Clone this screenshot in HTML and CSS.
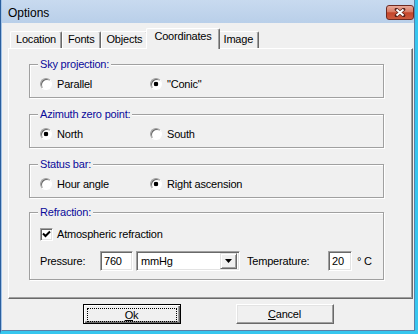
FILE: index.html
```html
<!DOCTYPE html>
<html lang="en">
<head>
    <meta charset="UTF-8">
    <meta name="viewport" content="width=device-width, initial-scale=1.0">
    <title>Options</title>
    <link rel="stylesheet" href="styles.css">
</head>
<body>
    <div class="window">
        <div class="frame">
            <div class="titlebar">
                <span class="title">Options</span>
                <button class="close-btn" aria-label="Close">
                    <svg width="12" height="9" viewBox="0 0 12 9">
                        <path d="M2.5 1.5 L9.5 7.5 M9.5 1.5 L2.5 7.5" stroke="#5a2119" stroke-width="3.6" stroke-linecap="round"/>
                        <path d="M2.5 1.5 L9.5 7.5 M9.5 1.5 L2.5 7.5" stroke="#fff" stroke-width="2"/>
                    </svg>
                </button>
            </div>

            <div class="dialog">
                <!-- Tabs -->
                <div class="tabs">
                    <div class="tab">Location</div>
                    <div class="tab">Fonts</div>
                    <div class="tab">Objects</div>
                    <div class="tab active">Coordinates</div>
                    <div class="tab">Image</div>
                </div>

                <div class="panel">
                    <fieldset class="group">
                        <legend>Sky projection:</legend>
                        <div class="options">
                            <label class="radio"><span class="dot"></span>Parallel</label>
                            <label class="radio checked"><span class="dot"></span>"Conic"</label>
                        </div>
                    </fieldset>

                    <fieldset class="group">
                        <legend>Azimuth zero point:</legend>
                        <div class="options">
                            <label class="radio checked"><span class="dot"></span>North</label>
                            <label class="radio"><span class="dot"></span>South</label>
                        </div>
                    </fieldset>

                    <fieldset class="group">
                        <legend>Status bar:</legend>
                        <div class="options">
                            <label class="radio"><span class="dot"></span>Hour angle</label>
                            <label class="radio checked"><span class="dot"></span>Right ascension</label>
                        </div>
                    </fieldset>

                    <fieldset class="group refraction">
                        <legend>Refraction:</legend>
                        <label class="check">
                            <span class="box">
                                <svg width="11" height="11" viewBox="0 0 11 11">
                                    <path d="M2 4.5 L4.5 7 L9 2.5" fill="none" stroke="#000" stroke-width="2"/>
                                </svg>
                            </span>
                            Atmospheric refraction
                        </label>
                        <div class="field-row">
                            <span class="lbl-pressure">Pressure:</span>
                            <span class="edit pressure">760</span>
                            <span class="combo">
                                <span class="combo-text">mmHg</span>
                                <span class="combo-btn">
                                    <svg width="7" height="4" viewBox="0 0 7 4"><path d="M0 0 H7 L3.5 4 Z" fill="#000"/></svg>
                                </span>
                            </span>
                            <span class="lbl-temp">Temperature:</span>
                            <span class="edit temp">20</span>
                            <span class="unit">&deg; C</span>
                        </div>
                    </fieldset>
                </div>

                <div class="buttons">
                    <button class="btn default"><span class="focus"><u>O</u>k</span></button>
                    <button class="btn"><u>C</u>ancel</button>
                </div>
            </div>
        </div>
    </div>
</body>
</html>
```

FILE: styles.css
```css
body {
    margin: 0;
    padding: 0;
    background-color: #f0f0f0;
    font-family: "Liberation Sans", Arial, sans-serif;
    font-size: 11px;
    letter-spacing: -0.2px;
    color: #000;
}
.window {
    width: 418px;
    height: 334px;
    box-sizing: border-box;
    border-left: 1px solid #2b5f9e;
    border-right: 3px solid #36c6ee;
    border-bottom: 3px solid #36c6ee;
    background-color: #f0f0f0;
}
.frame {
    height: 100%;
    box-sizing: border-box;
    border-left: 1px solid #a4c4e8;
    border-right: 1px solid #5c7fa6;
    border-bottom: 1px solid #5c7fa6;
}
.titlebar {
    height: 23px;
    display: flex;
    justify-content: space-between;
    align-items: flex-start;
    background: linear-gradient(#c8daef, #b9cfe9);
}
.title {
    padding: 3px 0 0 6px;
    line-height: 20px;
    font-size: 12px;
    letter-spacing: 0;
}
.close-btn {
    margin-top: 5px;
    width: 28px;
    height: 15px;
    padding: 0;
    border: 1px solid #6d2a22;
    border-radius: 3px;
    background: linear-gradient(#e9a999 0%, #d97b64 45%, #c4452a 52%, #cc5a3e 100%);
    display: flex;
    align-items: center;
    justify-content: center;
}

/* Tabs */
.tabs {
    display: flex;
    align-items: flex-end;
    height: 26px;
    margin-left: 6px;
    margin-bottom: -1px;
    padding-left: 2px;
    position: relative;
    z-index: 1;
}
.tab {
    height: 17px;
    box-sizing: border-box;
    margin-bottom: 1px;
    padding: 0 5px;
    line-height: 15px;
    border: 1px solid #fff;
    border-right-color: #696969;
    border-bottom: none;
    border-radius: 2px 2px 0 0;
    box-shadow: inset -1px 0 0 #a0a0a0;
    background-color: #f0f0f0;
}
.tab.active {
    height: 21px;
    margin: 0 -2px;
    padding: 0 7px;
    line-height: 14px;
    position: relative;
    z-index: 2;
}

/* Panel */
.panel {
    margin-left: 6px;
    width: 405px;
    height: 251px;
    box-sizing: border-box;
    padding: 9px 0 0 20px;
    border: 1px solid;
    border-color: #fff #696969 #696969 #fff;
    box-shadow: inset -1px -1px 0 #a0a0a0;
}
.group {
    width: 355px;
    box-sizing: border-box;
    margin: 0 0 10px;
    padding: 5px 10px;
    border: 1px solid #a0a0a0;
    box-shadow: 1px 1px 0 #fff, inset 1px 1px 0 #fff;
}
.group legend {
    margin-left: -2px;
    padding: 0 2px;
    line-height: 13px;
    color: #0a0a9a;
    background-color: #f0f0f0;
}
.group.refraction {
    margin-top: -2px;
    padding: 7px 10px 8px;
}
.options {
    display: grid;
    grid-template-columns: 110px auto;
    height: 16px;
    align-items: center;
}
.radio {
    display: flex;
    align-items: center;
}
.dot {
    width: 12px;
    height: 12px;
    box-sizing: border-box;
    margin-right: 5px;
    border-radius: 50%;
    border: 1px solid;
    border-color: #a0a0a0 #fff #fff #a0a0a0;
    box-shadow: inset 1px 1px 0 #696969;
    background-color: #fff;
}
.radio.checked .dot {
    background: radial-gradient(circle, #000 0 2px, #fff 2.6px);
}
.check {
    display: flex;
    align-items: center;
    height: 16px;
}
.box {
    width: 13px;
    height: 13px;
    box-sizing: border-box;
    margin-right: 4px;
    border: 1px solid;
    border-color: #a0a0a0 #fff #fff #a0a0a0;
    box-shadow: inset 1px 1px 0 #696969, inset -1px -1px 0 #e3e3e3;
    background-color: #fff;
    display: flex;
}
.field-row {
    display: flex;
    align-items: center;
    margin-top: 9px;
    height: 20px;
}
.lbl-pressure {
    width: 60px;
}
.edit,
.combo {
    height: 20px;
    box-sizing: border-box;
    border: 1px solid;
    border-color: #a0a0a0 #fff #fff #a0a0a0;
    box-shadow: inset 1px 1px 0 #696969, inset -1px -1px 0 #e3e3e3;
    background-color: #fff;
    line-height: 18px;
    padding-left: 3px;
}
.edit.pressure {
    width: 33px;
}
.combo {
    width: 104px;
    margin-left: 3px;
    display: flex;
    justify-content: space-between;
    padding: 2px 2px 2px 4px;
    line-height: 14px;
}
.combo-btn {
    width: 17px;
    height: 16px;
    margin-top: -1px;
    box-sizing: border-box;
    border: 1px solid;
    border-color: #e3e3e3 #696969 #696969 #e3e3e3;
    box-shadow: inset 1px 1px 0 #fff, inset -1px -1px 0 #a0a0a0;
    background-color: #f0f0f0;
    display: flex;
    align-items: center;
    justify-content: center;
}
.lbl-temp {
    width: 81px;
    margin-left: 7px;
}
.edit.temp {
    width: 24px;
}
.unit {
    margin-left: 5px;
}

/* Buttons */
.buttons {
    display: flex;
    justify-content: center;
    gap: 55px;
    margin-top: 5px;
}
.btn {
    width: 98px;
    height: 20px;
    padding: 0;
    font-family: inherit;
    font-size: 11px;
    letter-spacing: -0.2px;
    color: #000;
    background-color: #f0f0f0;
    border: 1px solid;
    border-color: #fff #696969 #696969 #fff;
    box-shadow: inset -1px -1px 0 #a0a0a0, inset 1px 1px 0 #e3e3e3;
}
.btn.default {
    border-color: #000;
    box-shadow: inset 1px 1px 0 #fff, inset -1px -1px 0 #696969, inset -2px -2px 0 #a0a0a0;
    padding: 3px;
}
.focus {
    display: block;
    height: 12px;
    line-height: 12px;
    border: 1px dotted #000;
}
```
